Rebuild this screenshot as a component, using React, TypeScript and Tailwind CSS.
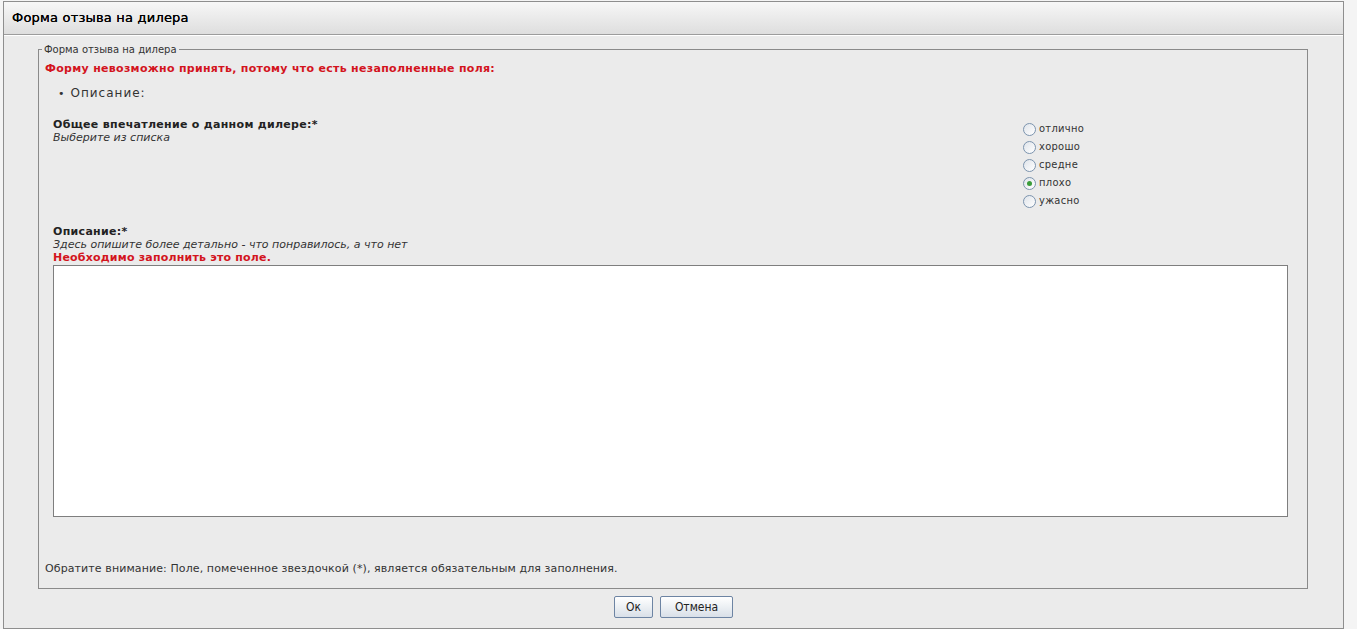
import React from "react";

const ratings = [
  { label: "отлично", checked: false },
  { label: "хорошо", checked: false },
  { label: "средне", checked: false },
  { label: "плохо", checked: true },
  { label: "ужасно", checked: false },
];

const Radio: React.FC<{ checked: boolean }> = ({ checked }) => (
  <span className="flex h-[13px] w-[13px] items-center justify-center rounded-full border border-[#7c94ae] bg-gradient-to-br from-[#dfe4ea] to-white">
    {checked && <span className="h-[5px] w-[5px] rounded-full bg-[#3a9c3a]" />}
  </span>
);

const App: React.FC = () => {
  const tahoma = "font-['DejaVu_Sans_Condensed','DejaVu_Sans',sans-serif]";

  return (
    <div className="h-[629px] w-full bg-[#f4f4f4] pt-[1px] pl-[3px] font-['DejaVu_Sans',sans-serif] text-[11px] text-[#222]">
      <div className="flex h-[628px] w-[1341px] flex-col border border-[#8e8e8e] bg-[#ebebeb]">
        {/* Header bar */}
        <div className="flex h-[33px] items-center border-b border-[#9c9c9c] bg-gradient-to-b from-[#f7f7f7] to-[#dedede] pl-[8px] shadow-[0_1px_0_#ffffff]">
          <span className="text-[13px] tracking-[0.2px] text-[#000] [text-shadow:0_0_0.4px_#000]">Форма отзыва на дилера</span>
        </div>

        {/* Form fieldset */}
        <fieldset className="mt-[8px] ml-[34px] w-[1270px] border border-[#8a8a8a] px-[6px] pb-[13px]">
          <legend className="-ml-[3px] px-[2px] text-[10px] leading-[13px] text-[#333]">Форма отзыва на дилера</legend>

          <div className="mt-[6px] font-bold leading-[13px] tracking-[0.3px] text-[#d3141d]">
            Форму невозможно принять, потому что есть незаполненные поля:
          </div>

          <div className="mt-[12px] flex items-center gap-[6px] pl-[13px] leading-[13px] text-[#333]">
            <span>•</span>
            <span className="text-[12px] tracking-[1px]">Описание:</span>
          </div>

          {/* Rating question */}
          <div className="mt-[18px] flex pl-[8px]">
            <div className="flex-1">
              <div className="font-bold leading-[13px] tracking-[0.3px]">Общее впечатление о данном дилере:*</div>
              <div className="italic leading-[14px] text-[#333]">Выберите из списка</div>
            </div>
            <div className="flex w-[278px] flex-col pt-[2px]">
              {ratings.map((r) => (
                <label key={r.label} className={`${tahoma} flex h-[18px] items-center gap-[3px] text-[#333]`}>
                  <Radio checked={r.checked} />
                  <span className="tracking-[0.3px]">{r.label}</span>
                </label>
              ))}
            </div>
          </div>

          {/* Description */}
          <div className="mt-[15px] pl-[8px]">
            <div className="font-bold leading-[13px] tracking-[0.3px]">Описание:*</div>
            <div className="italic leading-[14px] text-[#333]">
              Здесь опишите более детально - что понравилось, а что нет
            </div>
            <div className="font-bold leading-[12px] tracking-[0.2px] text-[#d3141d]">Необходимо заполнить это поле.</div>
            <textarea className="mt-[1px] block h-[252px] w-[1235px] resize-none border border-[#7e7e7e] bg-white outline-none" />
          </div>

          <div className="mt-[45px] leading-[13px] tracking-[0.1px] text-[#333]">
            Обратите внимание: Поле, помеченное звездочкой (*), является обязательным для заполнения.
          </div>
        </fieldset>

        {/* Buttons */}
        <div className="mt-[7px] flex justify-center gap-[7px]">
          <button className={`${tahoma} h-[22px] w-[39px] rounded-[2px] border border-[#6d84a3] bg-gradient-to-b from-white to-[#d9e0e8] text-[12px] text-[#222]`}>
            Ок
          </button>
          <button className={`${tahoma} h-[22px] w-[73px] rounded-[2px] border border-[#6d84a3] bg-gradient-to-b from-white to-[#d9e0e8] text-[12px] text-[#222]`}>
            Отмена
          </button>
        </div>
      </div>
    </div>
  );
};

export default App;
